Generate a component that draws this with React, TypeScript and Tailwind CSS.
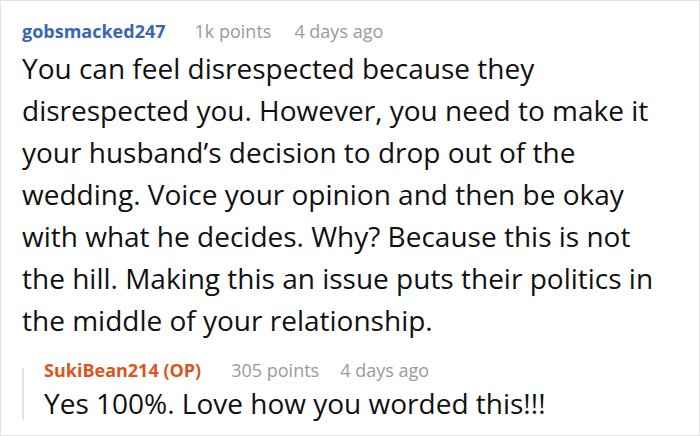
export default function App() {
  return (
    <div className="w-[700px] h-[436px] bg-white border border-[#e3e3e3] overflow-hidden font-['Open_Sans',sans-serif]">
      <div className="pl-[21px] pr-[21px] pt-[15px]">
        <div className="flex items-baseline text-[18px] leading-[30px]">
          <span className="font-bold text-[#3a66b4]">gobsmacked247</span>
          <span className="ml-[29px] text-[#9a9a9a]">1k points</span>
          <span className="ml-[23px] text-[#9a9a9a]">4 days ago</span>
        </div>
        <p className="text-[28px] leading-[42px] text-[#111] mt-[1px]">
          You can feel disrespected because they disrespected you. However, you need to make it your husband’s decision to drop out of the wedding. Voice your opinion and then be okay with what he decides. Why? Because this is not the hill. Making this an issue puts their politics in the middle of your relationship.
        </p>
        <div className="flex mt-[14px]">
          <div className="w-[2px] bg-[#e4e4e4] mt-[13px] mb-[2px]" />
          <div className="pl-[20px]">
            <div className="flex items-baseline text-[18px] leading-[30px]">
              <span className="font-bold text-[#dc5420]">SukiBean214 (OP)</span>
              <span className="ml-[30px] text-[#9a9a9a]">305 points</span>
              <span className="ml-[21px] text-[#9a9a9a]">4 days ago</span>
            </div>
            <p className="text-[28px] leading-[37px] text-[#111]">Yes 100%. Love how you worded this!!!</p>
          </div>
        </div>
      </div>
    </div>
  );
}
